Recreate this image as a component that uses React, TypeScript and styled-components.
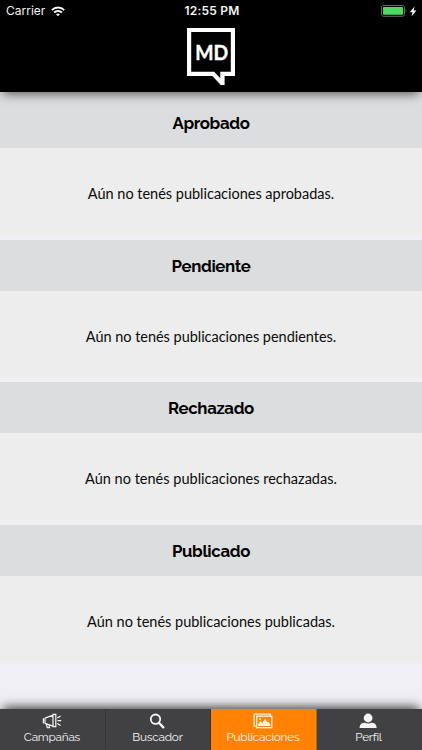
import React from "react";
import styled, { createGlobalStyle } from "styled-components";

const GlobalStyle = createGlobalStyle`
  * { box-sizing: border-box; }
  body { margin: 0; background: #efeff4; }
`;

const Screen = styled.div`
  display: flex;
  flex-direction: column;
  width: 422px;
  height: 750px;
  overflow: hidden;
  background: #efeff4;
  color: #0b0b0b;
  font-family: Lato, sans-serif;
`;

const Header = styled.header`
  display: flex;
  flex-direction: column;
  align-items: center;
  height: 92px;
  flex: none;
  background: #000;
  box-shadow: 0 5px 10px -3px rgba(0, 0, 0, 0.6);
  z-index: 1;
`;

const StatusBar = styled.div`
  display: grid;
  grid-template-columns: 1fr auto 1fr;
  align-items: center;
  width: 100%;
  height: 22px;
  padding: 0 5px 0 6px;
  color: #f4f4f4;
  font-family: Inter, sans-serif;
  font-size: 12px;
  line-height: 22px;
`;

const Carrier = styled.div`
  display: flex;
  align-items: center;
  gap: 6px;
  letter-spacing: 0;
`;

const Clock = styled.div`
  padding-left: 1px;
  font-weight: 600;
  letter-spacing: 0.2px;
`;

const Power = styled.div`
  display: flex;
  align-items: center;
  justify-content: flex-end;
  gap: 2px;
`;

const Logo = styled.svg`
  width: 50px;
  height: 60px;
  margin-top: 4px;
  font-family: Lato, sans-serif;
  font-weight: 700;
`;

const Sections = styled.main`
  display: flex;
  flex-direction: column;
  flex: 1;
  gap: 4.5px;
`;

const Section = styled.section`
  flex: none;
`;

const SectionTitle = styled.h2<{ $first: boolean }>`
  margin: 0;
  height: ${({ $first }) => ($first ? 56 : 51)}px;
  padding-top: ${({ $first }) => ($first ? 5 : 0)}px;
  background: #dcddde;
  color: #000;
  text-align: center;
  font-family: Raleway, Lato, sans-serif;
  font-size: 16.8px;
  font-weight: 700;
  line-height: 52px;
  letter-spacing: -0.35px;
`;

const Message = styled.p<{ $spacing: number }>`
  margin: 0;
  height: 87px;
  background: #ededed;
  text-align: center;
  font-size: 14.5px;
  line-height: 91px;
  letter-spacing: ${({ $spacing }) => $spacing}px;
`;

const TabBar = styled.nav`
  display: grid;
  grid-template-columns: repeat(4, 1fr);
  height: 41px;
  flex: none;
  background: #414143;
  box-shadow: 0 -5px 10px -3px rgba(0, 0, 0, 0.75);
`;

const Tab = styled.div<{ $active?: boolean }>`
  display: flex;
  flex-direction: column;
  align-items: center;
  padding: 4px 1.6px 0 0;
  background: ${({ $active }) => ($active ? "#ff8204" : "#414143")};
  box-shadow: inset -1px 0 ${({ $active }) => ($active ? "#b9620d" : "#353537")};
  color: #f5f5f5;

  &:last-child {
    box-shadow: none;
  }
`;

const TabLabel = styled.span`
  font-family: Raleway, Lato, sans-serif;
  font-size: 11.8px;
  line-height: 16px;
  letter-spacing: -0.22px;
`;

const TabIcon = styled.svg`
  width: 20px;
  height: 16px;
  flex: none;
`;

const WifiIcon = () => (
  <svg width="14" height="11" viewBox="0 0 14 11" fill="none" stroke="#fff" strokeWidth="1.9">
    <path d="M.8 4.1C4.4.7 9.6.7 13.2 4.1M3.1 6.5c2.2-2.1 5.6-2.1 7.8 0" />
    <path d="M5 8.2c1.1-1 2.9-1 4 0l-2 2.1z" fill="#fff" stroke="none" />
  </svg>
);

const BatteryIcon = () => (
  <svg width="27" height="12" viewBox="0 0 27 12">
    <rect x="1.5" y=".5" width="23" height="10.8" rx="2.2" fill="#000" stroke="#666b66" />
    <rect x="3" y="2" width="20" height="7.8" rx=".7" fill="#4cd964" />
    <path d="M25.7 4q1.5 1.8 0 3.6z" fill="#777" />
  </svg>
);

const BoltIcon = () => (
  <svg width="8" height="11" viewBox="0 0 8 11">
    <path d="M5.6.4.8 6.2h2.8L2.4 10.6 7.4 4.5H4.6z" fill="#fff" />
  </svg>
);

const BrandLogo = () => (
  <Logo viewBox="0 0 50 60">
    <path
      fillRule="evenodd"
      fill="#fff"
      d="M1 2H49V50H38.6V59H34.8L26.3 50H1ZM5.2 6.1V45.8H28.2L34.3 52.3V45.8H44.8V6.1Z"
    />
    <text
      x="9.2"
      y="34.2"
      fontSize="21"
      textLength="33"
      lengthAdjust="spacingAndGlyphs"
      fill="#fff"
      stroke="#fff"
      strokeWidth="0.4"
    >
      MD
    </text>
  </Logo>
);

const CampaignIcon = () => (
  <TabIcon viewBox="0 0 20 16" fill="none" stroke="#f5f5f5" strokeWidth="1.2">
    <path d="M1.4 5.2v5.3M3 4.9v5.5M3 5.1l8-3v11L3 10.4M11 1.4h2.8v12.3H11zM4.2 10.8l1.1 3.9h2.3l-.8-3" />
    <path d="m15.2 4.9 3.4-2M15.5 7.7h3.8M15.2 10.5l3.4 2" />
  </TabIcon>
);

const SearchIcon = () => (
  <TabIcon viewBox="0 0 20 16" fill="none" stroke="#f5f5f5">
    <circle cx="8.5" cy="6.2" r="4.7" strokeWidth="1.8" />
    <path d="m11.9 9.8 4.4 4.6" strokeWidth="2.3" strokeLinecap="round" />
  </TabIcon>
);

const GalleryIcon = () => (
  <TabIcon viewBox="0 0 20 16" fill="none" stroke="#fff4e4">
    <path d="M3 13.2H1.2V1.2h16V3" strokeWidth="1.2" />
    <rect x="3.7" y="3.2" width="15.1" height="11.5" strokeWidth="1.3" />
    <path d="M5.3 13.1V11l2.2-3 1.8 2.1 2.9-4.5 2.1 4 1-1.1 2 3.1v1.5z" fill="#fff4e4" stroke="none" />
    <circle cx="7.1" cy="5.9" r="1" fill="#fff4e4" stroke="none" />
  </TabIcon>
);

const ProfileIcon = () => (
  <TabIcon viewBox="0 0 20 16" fill="#f5f5f5">
    <circle cx="10.1" cy="5" r="4.4" />
    <path d="M1.5 15q.3-5.2 5.1-5.2 3.5 1.5 7 0 4.8 0 5.1 5.2z" />
  </TabIcon>
);

const sections = [
  { title: "Aprobado", message: "Aún no tenés publicaciones aprobadas.", spacing: -0.01 },
  { title: "Pendiente", message: "Aún no tenés publicaciones pendientes.", spacing: -0.03 },
  { title: "Rechazado", message: "Aún no tenés publicaciones rechazadas.", spacing: 0.01 },
  { title: "Publicado", message: "Aún no tenés publicaciones publicadas.", spacing: -0.01 },
];

const tabs = [
  { label: "Campañas", Icon: CampaignIcon },
  { label: "Buscador", Icon: SearchIcon },
  { label: "Publicaciones", Icon: GalleryIcon, active: true },
  { label: "Perfil", Icon: ProfileIcon },
];

export default function App() {
  return (
    <Screen>
      <GlobalStyle />
      <Header>
        <StatusBar>
          <Carrier>Carrier <WifiIcon /></Carrier>
          <Clock>12:55 PM</Clock>
          <Power><BatteryIcon /><BoltIcon /></Power>
        </StatusBar>
        <BrandLogo />
      </Header>
      <Sections>
        {sections.map(({ title, message, spacing }, index) => (
          <Section key={title}>
            <SectionTitle $first={index === 0}>{title}</SectionTitle>
            <Message $spacing={spacing}>{message}</Message>
          </Section>
        ))}
      </Sections>
      <TabBar>
        {tabs.map(({ label, Icon, active }) => (
          <Tab key={label} $active={active}>
            <Icon />
            <TabLabel>{label}</TabLabel>
          </Tab>
        ))}
      </TabBar>
    </Screen>
  );
}
